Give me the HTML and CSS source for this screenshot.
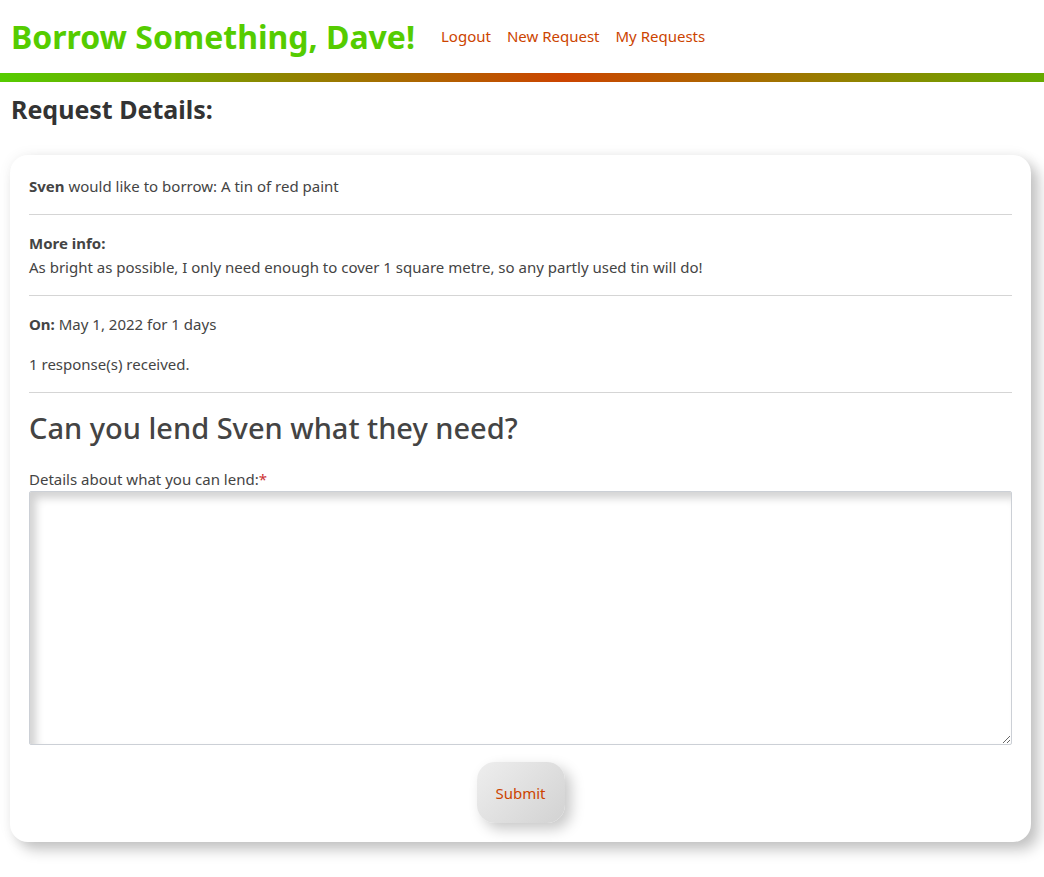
FILE: index.html
```html
<!DOCTYPE html>
<html lang="en">
<head>
<meta charset="utf-8">
<title>Borrow Something</title>
<link rel="stylesheet" href="styles.css">
</head>
<body>
<header class="site-header">
  <h1 class="brand">Borrow Something, Dave!</h1>
  <nav class="nav">
    <a href="#">Logout</a>
    <a href="#">New Request</a>
    <a href="#">My Requests</a>
  </nav>
</header>
<div class="rule-bar"></div>
<main class="main">
  <h2 class="page-title">Request Details:</h2>
  <section class="card">
    <p class="line"><b>Sven</b> would like to borrow: A tin of red paint</p>
    <hr class="sep">
    <div class="info">
      <b>More info:</b>
      <p class="info-text">As bright as possible, I only need enough to cover 1 square metre, so any partly used tin will do!</p>
    </div>
    <hr class="sep">
    <p class="line"><b>On:</b> May 1, 2022 for 1 days</p>
    <p class="line responses">1 response(s) received.</p>
    <hr class="sep">
    <h3 class="question">Can you lend Sven what they need?</h3>
    <form class="lend-form">
      <label class="field-label" for="details">Details about what you can lend:<span class="req">*</span></label>
      <textarea id="details" class="field-text"></textarea>
      <div class="actions"><button type="button" class="submit">Submit</button></div>
    </form>
  </section>
</main>
</body>
</html>
```
FILE: styles.css
```css
html, body { margin: 0; padding: 0; background: #fff; }
body {
  font-family: "Noto Sans", "Open Sans", sans-serif;
  font-size: 15px;
  color: #444;
}
.site-header {
  display: flex;
  align-items: center;
  padding: 18px 11px 0 11px;
  height: 55px;
  box-sizing: border-box;
}
.brand {
  margin: 0;
  font-family: "Noto Sans", sans-serif;
  font-weight: 700;
  font-size: 32px;
  color: #55cc00;
  letter-spacing: 0;
}
.nav { display: flex; gap: 16px; margin-left: 26px; margin-bottom: 2px; }
.nav a { color: #cc4400; text-decoration: none; font-size: 15px; }
.rule-bar {
  margin-top: 18px;
  height: 9px;
  background: linear-gradient(90deg, #55cc00 0%, #8a8a00 25%, #cc4400 54%, #9a7a00 78%, #66aa00 100%);
}
.main { padding: 0 10px 30px 10px; }
.page-title {
  margin: 10px 0 29px 1px;
  font-size: 25px;
  font-weight: 700;
  color: #333;
}
.card {
  background: #fff;
  border-radius: 18px;
  margin-right: 3px;
  padding: 19px 19px 19px 19px;
  box-shadow: 8px 8px 14px rgba(0,0,0,0.22), 0 0 14px rgba(0,0,0,0.06);
}
.line { margin: 0; line-height: 24px; }
.responses { margin-top: 16px; }
.sep { border: 0; border-top: 1px solid #d5d5d5; margin: 16px 0 16px 0; }
.info b { display: block; line-height: 24px; }
.info-text { margin: 0; line-height: 24px; }
.question {
  margin: 0 0 22px 0;
  font-size: 29px;
  font-weight: 500;
  color: #444;
  line-height: 38px;
}
.lend-form { display: flex; flex-direction: column; }
.field-label { line-height: 20px; margin-bottom: 2px; }
.req { color: #cc3333; }
.field-text {
  height: 254px;
  box-sizing: border-box;
  border: 1px solid #ccd0d6;
  border-radius: 2px;
  box-shadow: inset 6px 6px 8px rgba(0,0,0,0.18);
  resize: both;
  font: inherit;
}
.actions { display: flex; justify-content: center; margin-top: 17px; }
.submit {
  width: 88px;
  height: 61px;
  border: 0;
  border-radius: 18px;
  background: linear-gradient(135deg, #eeeeee, #d2d2d2);
  box-shadow: 6px 6px 14px rgba(0,0,0,0.22);
  color: #cc4400;
  font-family: inherit;
  font-size: 15px;
}
```
